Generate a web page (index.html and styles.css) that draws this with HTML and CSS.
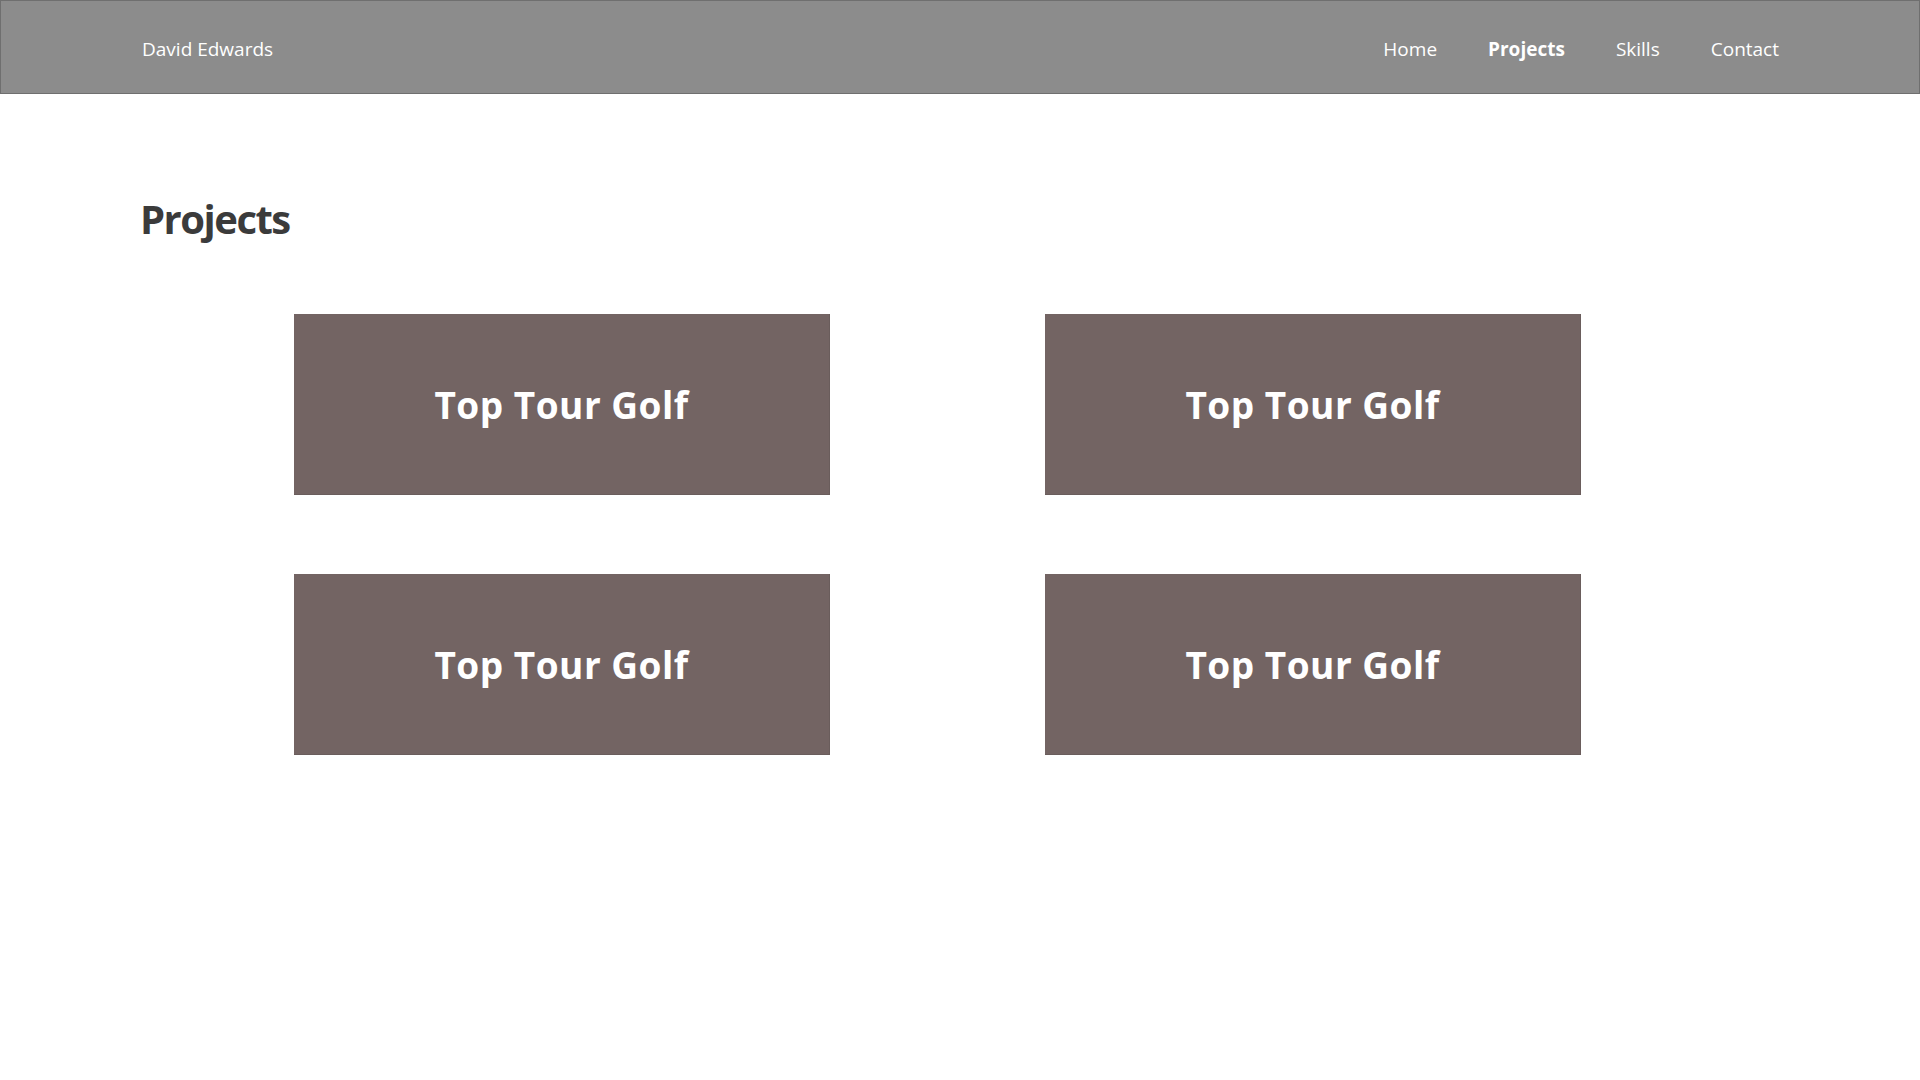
FILE: index.html
```html
<!DOCTYPE html>
<html lang="en">
<head>
<meta charset="utf-8">
<title>David Edwards - Projects</title>
<link rel="stylesheet" href="styles.css">
</head>
<body>
<header class="site-header">
  <div class="brand">David Edwards</div>
  <nav class="nav">
    <a href="#" class="nav-link">Home</a>
    <a href="#" class="nav-link active">Projects</a>
    <a href="#" class="nav-link">Skills</a>
    <a href="#" class="nav-link">Contact</a>
  </nav>
</header>
<main class="content">
  <h1 class="page-title">Projects</h1>
  <section class="project-grid">
    <div class="project-card">Top Tour Golf</div>
    <div class="project-card">Top Tour Golf</div>
    <div class="project-card">Top Tour Golf</div>
    <div class="project-card">Top Tour Golf</div>
  </section>
</main>
</body>
</html>
```

FILE: styles.css
```css
* {
  box-sizing: border-box;
}

html, body {
  margin: 0;
  padding: 0;
  background: #ffffff;
  font-family: "Open Sans", "Noto Sans", "Liberation Sans", sans-serif;
}

.site-header {
  height: 94px;
  background: #8c8c8c;
  border: 1px solid #6f6f6f;
  display: flex;
  align-items: center;
  justify-content: space-between;
  padding: 4px 140px 0 141px;
}

.brand {
  color: #ffffff;
  font-size: 19px;
}

.nav {
  display: flex;
  align-items: center;
  gap: 51px;
}

.nav-link {
  color: #ffffff;
  text-decoration: none;
  font-size: 19px;
}

.nav-link.active {
  font-weight: 700;
}

.content {
  padding: 0 141px;
}

.page-title {
  margin: 100px 0 0 -1px;
  font-size: 40px;
  line-height: 50px;
  font-weight: 700;
  color: #3b3b3b;
  letter-spacing: -1.5px;
}

.project-grid {
  display: grid;
  grid-template-columns: 536px 536px;
  grid-auto-rows: 181px;
  column-gap: 215px;
  row-gap: 79px;
  margin: 70px 0 0 153px;
}

.project-card {
  background: #736463;
  border-right: 1px solid #6a5d5c;
  border-bottom: 1px solid #6a5d5c;
  color: #ffffff;
  font-size: 37px;
  font-weight: 700;
  letter-spacing: 0.5px;
  display: flex;
  align-items: center;
  justify-content: center;
}
```
